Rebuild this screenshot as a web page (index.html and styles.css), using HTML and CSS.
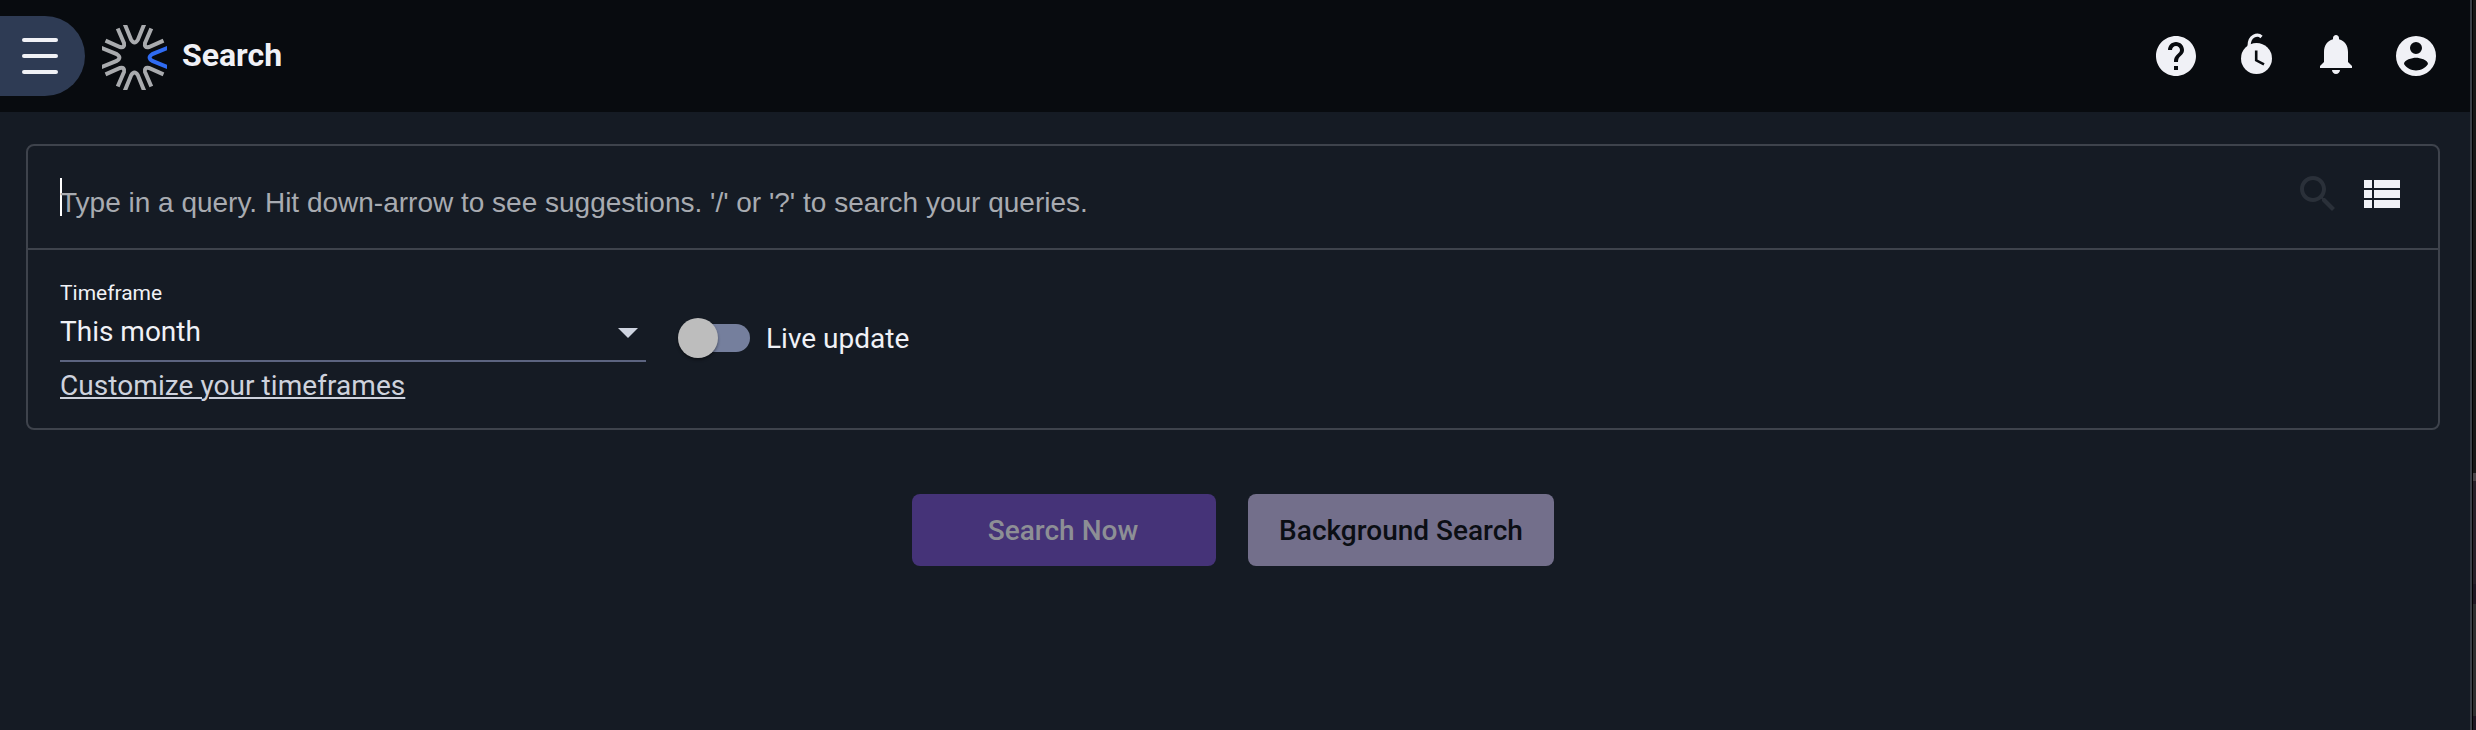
FILE: index.html
```html
<!DOCTYPE html>
<html lang="en">
<head>
<meta charset="utf-8">
<title>Search</title>
<link rel="stylesheet" href="styles.css">
</head>
<body>
<div class="shell">
<div class="app">
  <header class="topbar">
    <button class="menu" aria-label="Menu"><span></span><span></span><span></span></button>
    <svg class="logo" viewBox="0 0 65 65">
      <defs><path id="ray" d="M-10 -34 L-3.4 -17.8 Q0 -12.400 3.4 -17.8 L10 -34"/></defs>
      <g transform="translate(32.5 32.5)" fill="none" stroke="#a9abae" stroke-width="4">
        <use href="#ray"/>
        <use href="#ray" transform="rotate(180)"/>
        <use href="#ray" transform="rotate(270)"/>
        <use href="#ray" transform="rotate(90)" stroke="#2f6bf2"/>
        <g>
          <path d="M16.8 -29 L10.5 -14.5 Q9.5 -9.5 14.5 -10.5 L29 -16.8"/>
          <path d="M16.8 29 L10.5 14.5 Q9.5 9.5 14.5 10.5 L29 16.8"/>
          <path d="M-16.8 -29 L-10.5 -14.5 Q-9.5 -9.5 -14.5 -10.5 L-29 -16.8"/>
          <path d="M-16.8 29 L-10.5 14.5 Q-9.5 9.5 -14.5 10.5 L-29 16.8"/>
        </g>
      </g>
    </svg>
    <h1 class="title">Search</h1>
    <nav class="actions">
      <svg viewBox="0 0 24 24"><path d="M12 2C6.48 2 2 6.48 2 12s4.48 10 10 10 10-4.480 10-10S17.520 2 12 2zm1 17h-2v-2h2v2zm2.070-7.750l-.9.920C13.450 12.900 13 13.500 13 15h-2v-.5c0-1.100.450-2.100 1.170-2.830l1.240-1.260c.370-.360.590-.860.590-1.410 0-1.100-.9-2-2-2s-2 .9-2 2H8c0-2.210 1.790-4 4-4s4 1.790 4 4c0 .880-.360 1.680-.930 2.250z"/></svg>
      <svg viewBox="0 0 48 48"><circle cx="24.500" cy="26.500" r="15.500"/><path class="hook" d="M17.200 15 C16.500 3 26 1.500 29.500 5"/><path class="hands" d="M24.200 18.500 V28.300 L32 32.300"/></svg>
      <svg class="bell" viewBox="0 0 24 24"><path d="M12 22c1.100 0 2-.9 2-2h-4c0 1.100.890 2 2 2zm6-6v-5c0-3.070-1.640-5.640-4.500-6.320V4c0-.830-.670-1.500-1.500-1.500s-1.500.670-1.500 1.500v.680C7.630 5.360 6 7.920 6 11v5l-2 2v1h16v-1l-2-2z"/></svg>
      <svg viewBox="0 0 24 24"><path fill-rule="evenodd" d="M12 2a10 10 0 1 0 0 20a10 10 0 1 0 0-20zM12 5a3 3 0 1 1 0 6a3 3 0 1 1 0-6zM12 19.200c-2.500 0-4.710-1.280-6-3.220.030-1.990 4-3.080 6-3.080 1.990 0 5.970 1.090 6 3.080-1.290 1.940-3.500 3.220-6 3.220z"/></svg>
    </nav>
  </header>
  <main class="content">
    <section class="card">
      <div class="query">
        <div class="input"><span class="caret"></span><span class="placeholder">Type in a query. Hit down-arrow to see suggestions. '/' or '?' to search your queries.</span></div>
        <svg class="find" viewBox="0 0 24 24"><path d="M15.500 14h-.790l-.280-.270C15.410 12.590 16 11.110 16 9.500 16 5.910 13.090 3 9.500 3S3 5.910 3 9.500 5.910 16 9.500 16c1.610 0 3.090-.590 4.230-1.570l.270.280v.790l5 4.990L20.490 19l-4.990-5zm-6 0C7.010 14 5 11.990 5 9.500S7.010 5 9.500 5 14 7.010 14 9.500 11.990 14 9.500 14z"/></svg>
        <svg class="list" viewBox="0 0 36 28"><path d="M0 0h8v8H0zM10 0h26v8H10zM0 10h8v8H0zM10 10h26v8H10zM0 20h8v8H0zM10 20h26v8H10z"/></svg>
      </div>
      <div class="options">
        <div class="timeframe">
          <label class="label">Timeframe</label>
          <div class="select"><span>This month</span><svg viewBox="0 0 20 10"><path d="M0 0h20L10 10z"/></svg></div>
          <a class="customize">Customize your timeframes</a>
        </div>
        <div class="live"><span class="switch"><span class="thumb"></span></span><span class="live-text">Live update</span></div>
      </div>
    </section>
    <div class="buttons">
      <button class="btn now"><span>Search Now</span></button>
      <button class="btn background"><span>Background Search</span></button>
    </div>
  </main>
</div>
<aside class="edge"></aside>
</div>
</body>
</html>
```
FILE: styles.css
```css
* { box-sizing: border-box; }
body { margin: 0; background: #151b24; font-family: Roboto, sans-serif; font-size: 28px; color: #f0f1f6; overflow: hidden; }
button { border: 0; padding: 0; font: inherit; }
svg { display: block; flex: none; }
.shell { display: flex; height: 730px; }
.app { width: 2472px; border-right: 2px solid #3b4048; }
.topbar { height: 112px; background: #080b0f; display: flex; align-items: center; padding-right: 30px; }
.menu { width: 85px; height: 80px; background: #2e3b54; border-radius: 0 40px 40px 0; display: flex; flex-direction: column; justify-content: center; gap: 12px; padding-left: 22px; }
.menu span { width: 36px; height: 4px; border-radius: 2px; background: #f0f1f6; }
.logo { width: 65px; height: 65px; margin: 3px 0 0 17px; }
.title { margin: -2px 0 0 15px; font-size: 32px; line-height: 40px; font-weight: 700; }
.actions { margin-left: auto; display: flex; gap: 32px; }
.actions svg { width: 48px; height: 48px; fill: #f0f1f6; }
.actions .bell { margin-top: -2px; }
.actions .hook { fill: none; stroke: #f0f1f6; stroke-width: 3.200; }
.actions .hands { fill: none; stroke: #080b0f; stroke-width: 2.600; }
.content { padding: 32px 30px 0 26px; }
.card { height: 286px; border: 2px solid #3e434c; border-radius: 8px; }
.query { height: 104px; border-bottom: 2px solid #3e434c; padding: 0 38px 0 32px; display: flex; }
.input { flex: 1; display: flex; font-family: "Liberation Sans", Arial, sans-serif; color: #a8abb1; }
.caret { width: 2px; height: 38px; margin: 32px -2px 0 0; background: #fff; }
.placeholder { line-height: 32px; padding-top: 41px; }
.find { width: 48px; height: 48px; margin: 24px 22px 0 0; fill: #2a3039; }
.list { width: 36px; height: 28px; margin-top: 34px; fill: #f0f1f6; }
.options { display: flex; gap: 32px; padding: 30px 32px 0; }
.timeframe { width: 586px; display: flex; flex-direction: column; align-items: flex-start; }
.label { font-size: 21px; line-height: 26px; }
.select { width: 100%; height: 56px; border-bottom: 2px solid #5c6480; display: flex; justify-content: space-between; line-height: 32px; padding: 10px 8px 0 0; }
.select svg { width: 20px; height: 10px; margin-top: 12px; fill: #ced4e0; }
.customize { color: #ced2dd; line-height: 32px; letter-spacing: .06px; margin-top: 8px; text-decoration: underline; text-decoration-thickness: 2px; text-underline-offset: 2px; }
.live { display: flex; padding-top: 38px; height: 80px; }
.switch { width: 72px; height: 28px; margin: 6px 0 0; border-radius: 14px; background: linear-gradient(90deg, transparent 14px, #757f9d 14px); }
.thumb { display: block; width: 40px; height: 40px; margin-top: -6px; border-radius: 50%; background: #bdbdbd; box-shadow: 0 2px 3px rgba(0, 0, 0, .4); }
.live-text { line-height: 32px; margin: 5px 0 0 16px; }
.buttons { display: flex; justify-content: center; gap: 32px; margin-top: 64px; }
.btn { height: 72px; border-radius: 8px; font-weight: 500; }
.now { width: 304px; padding-right: 2px; background: #453378; color: #8d8f95; }
.background { width: 306px; background: #736f8b; color: #0b0e14; }
.edge { width: 4px; border-left: 1px solid #000; background: linear-gradient(#171717 473px, #4a4549 473px 481px, #272029 481px 584px, #1e1723 584px 604px, #2e2f30 604px 716px, #1e1723 716px); }
```
